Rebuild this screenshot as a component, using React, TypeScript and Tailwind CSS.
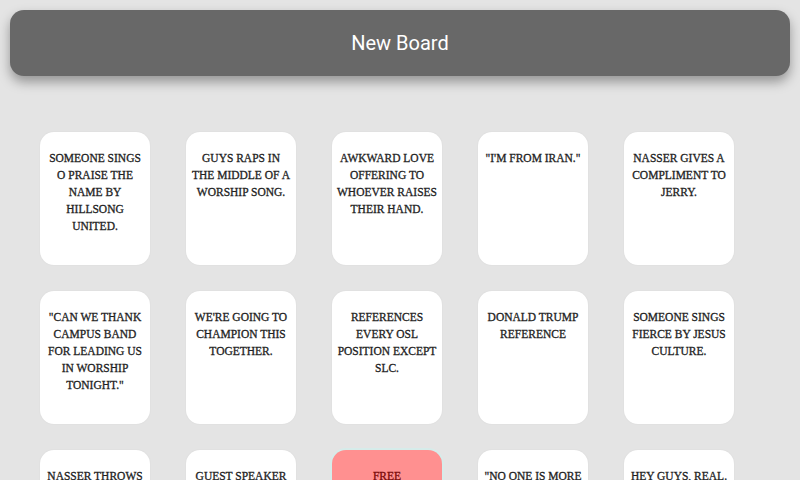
const squares = [
  "Someone sings O Praise the Name by Hillsong United.",
  "Guys raps in the middle of a worship song.",
  "Awkward love offering to whoever raises their hand.",
  "\"I'm from Iran.\"",
  "Nasser gives a compliment to Jerry.",
  "\"Can we thank Campus Band for leading us in worship tonight.\"",
  "We're going to champion this together.",
  "References every OSL position except SLC.",
  "Donald Trump reference",
  "Someone sings Fierce by Jesus Culture.",
  "Nasser throws",
  "Guest speaker",
  "FREE",
  "\"No one is more",
  "Hey guys, real.",
];

const Square = ({ text }: { text: string }) => {
  const free = text === "FREE";
  return (
    <div
      className={
        free
          ? "h-[133px] rounded-[14px] bg-[#ff9090] text-[#7a0a0a] ring-2 ring-[#d6ecea] px-[5px] pt-[18px] text-center"
          : "h-[133px] rounded-[14px] bg-white text-[#1e1e1e] shadow-[0_0_2px_rgba(0,0,0,0.06)] px-[5px] pt-[18px] text-center"
      }
    >
      <p className="font-['Liberation_Serif',serif] text-[11.5px] leading-[17px] uppercase [-webkit-text-stroke:0.3px_currentColor]">
        {text}
      </p>
    </div>
  );
};

export default function App() {
  return (
    <div className="w-[800px] h-[480px] overflow-hidden bg-[#e4e4e4] font-['Roboto',sans-serif]">
      <div className="px-[10px] pt-[10px]">
        <div className="h-[66px] rounded-[14px] bg-[#686868] flex items-center justify-center shadow-[0_6px_12px_rgba(0,0,0,0.35)]">
          <h1 className="text-white text-[20px]">New Board</h1>
        </div>
      </div>
      <div className="pl-[40px] pt-[56px] grid grid-cols-[repeat(5,110px)] gap-x-[36px] gap-y-[26px]">
        {squares.map((s, i) => (
          <Square key={i} text={s} />
        ))}
      </div>
    </div>
  );
}
